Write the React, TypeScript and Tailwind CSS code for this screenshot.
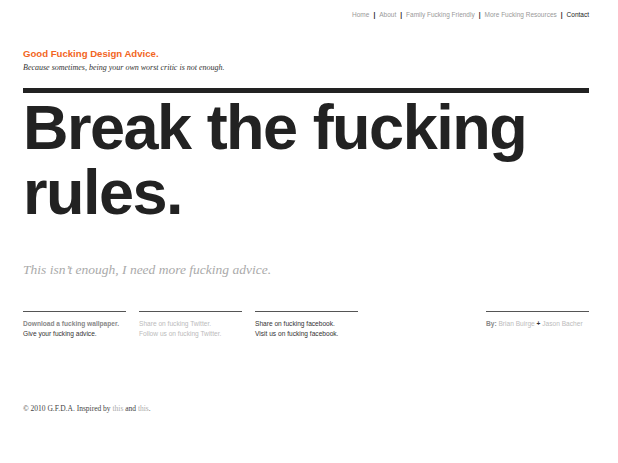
import React from 'react';

const sans = { fontFamily: '"Liberation Sans", Arial, sans-serif' };
const serif = { fontFamily: '"Liberation Serif", "Times New Roman", serif' };

const navLinks = ['Home', 'About', 'Family Fucking Friendly', 'More Fucking Resources'];

function Nav() {
  return (
    <nav className="flex justify-end items-center h-[30px] text-[6.5px] text-[#999]">
      {navLinks.map((link) => (
        <React.Fragment key={link}>
          <a>{link}</a>
          <span className="mx-[4px] font-bold text-[#222]">|</span>
        </React.Fragment>
      ))}
      <a className="text-[#222]">Contact</a>
    </nav>
  );
}

function FooterColumn({ children }: { children: React.ReactNode }) {
  return (
    <div className="w-[103px] border-t border-[#555] pt-[7px] text-[6.6px] leading-[10px]">
      {children}
    </div>
  );
}

export default function App() {
  return (
    <div className="w-[618px] h-[463px] bg-white" style={sans}>
      <div className="w-[566px] ml-[23px]">
        <Nav />

        <header className="mt-[18px]">
          <h1 className="text-[9.6px] font-bold text-[#f26522] leading-[12px]">Good Fucking Design Advice.</h1>
          <p className="mt-[3px] text-[8px] italic text-[#333] leading-[10px]" style={serif}>
            Because sometimes, being your own worst critic is not enough.
          </p>
        </header>

        <div className="mt-[15px] h-[5px] bg-[#222]" />

        <h2 className="mt-[2px] text-[63px] font-bold leading-[65px] text-[#222] tracking-[-1.5px]">
          Break the fucking
          <br />
          rules.
        </h2>

        <p className="mt-[36px] text-[13.5px] italic text-[#aaa] leading-[18px]" style={serif}>
          This isn’t enough, I need more fucking advice.
        </p>

        <div className="mt-[32px] flex gap-[13px]">
          <FooterColumn>
            <div className="font-bold text-[#888]">Download a fucking wallpaper.</div>
            <div className="text-[#333]">Give your fucking advice.</div>
          </FooterColumn>
          <FooterColumn>
            <div className="text-[#bbb]">Share on fucking Twitter.</div>
            <div className="text-[#bbb]">Follow us on fucking Twitter.</div>
          </FooterColumn>
          <FooterColumn>
            <div className="text-[#333]">Share on fucking facebook.</div>
            <div className="text-[#333]">Visit us on fucking facebook.</div>
          </FooterColumn>
          <div className="ml-auto">
            <FooterColumn>
              <div className="text-[#bbb]">
                <span className="font-bold text-[#888]">By:</span> Brian Buirge{' '}
                <span className="font-bold text-[#333]">+</span> Jason Bacher
              </div>
            </FooterColumn>
          </div>
        </div>

        <p className="mt-[64px] text-[7.5px] text-[#444]" style={serif}>
          © 2010 G.F.D.A. Inspired by <a className="text-[#aaa]">this</a> and <a className="text-[#aaa]">this</a>.
        </p>
      </div>
    </div>
  );
}
